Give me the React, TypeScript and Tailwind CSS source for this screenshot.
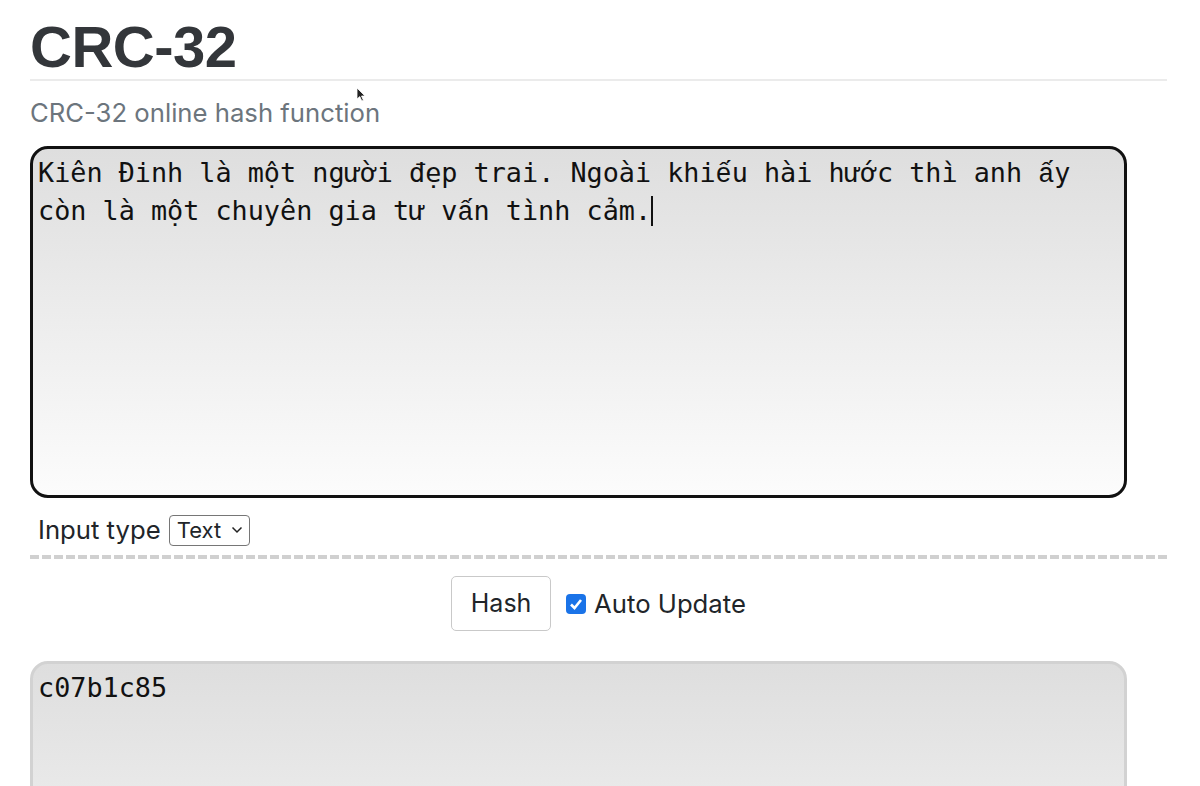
import React from "react";

const mono = "font-['DejaVu_Sans_Mono',monospace]";
// DejaVu Sans Mono stacks the double marks badly, so these two come from Liberation Mono
const alt = "font-['Liberation_Mono',monospace]";

export default function App() {
  return (
    <div className="relative min-h-[786px] bg-white font-['Inter','Liberation_Sans',sans-serif] text-[#212529]">
      {/* mouse pointer */}
      <svg className="absolute left-[356px] top-[87px]" width="10" height="16" viewBox="0 0 10 16">
        <path d="M1 1 L1 12 L3.8 9.6 L5.8 14 L7.4 13.2 L5.5 9 L9 9 Z" fill="#222" stroke="#fff" strokeWidth="0.8" />
      </svg>

      <div className="w-[1137px] ml-[30px] pt-[17px]">
        <div className="border-b-2 border-[#ebebeb] pb-[2px]">
          <h1 className="font-['Liberation_Sans',Arial,sans-serif] text-[58px] leading-[60px] font-bold text-[#33363a] tracking-[-0.5px]">
            CRC-32
          </h1>
        </div>
        <p className="mt-[14px] text-[25.7px] leading-[36px] text-[#6c757d]">CRC-32 online hash function</p>

        <div
          className={`mt-[15px] w-[1097px] h-[352px] overflow-hidden whitespace-pre-wrap break-words rounded-[18px] border-[3px] border-[#111] bg-[linear-gradient(180deg,#dedede_0%,#f0f0f0_60%,#fcfcfc_100%)] px-[5px] pt-[6px] text-[26.8px] leading-[36px] text-[#111] ${mono}`}
        >
          {"Ki\u00EAn \u0110inh l\u00E0 m\u1ED9t ng\u01B0\u1EDDi \u0111\u1EB9p trai. Ngo\u00E0i khi"}
          <span className={alt}>{"\u1EBF"}</span>
          {"u h\u00E0i h\u01B0\u1EDBc th\u00EC anh "}
          <span className={alt}>{"\u1EA5"}</span>
          {"y c\u00F2n l\u00E0 m\u1ED9t chuy\u00EAn gia t\u01B0 v"}
          <span className={alt}>{"\u1EA5"}</span>
          {"n t\u00ECnh c\u1EA3m."}
          <span className="inline-block w-[1.5px] h-[30px] align-[-6px] bg-[#111]" />
        </div>

        <div className="mt-[15px] flex items-center gap-[8px] pl-[8px] h-[34px]">
          <span className="text-[25.7px] leading-[32px]">Input type</span>
          <div className="flex items-center justify-between w-[81px] h-[31px] rounded-[4px] border border-[#767676] pl-[7px] pr-[6px] text-[22px] leading-[28px]">
            <span>Text</span>
            <svg width="12" height="8" viewBox="0 0 12 8">
              <path d="M1.5 1.5 L6 6 L10.5 1.5" fill="none" stroke="#222" strokeWidth="1.5" />
            </svg>
          </div>
        </div>

        <div className="mt-[8px] h-[4px] bg-[repeating-linear-gradient(90deg,#d0d0d0_0px,#d0d0d0_9px,transparent_9px,transparent_12px)]" />

        <div className="mt-[17px] flex items-center justify-center gap-[15px]">
          <button className="h-[55px] w-[100px] rounded-[5px] border border-[#c9c9c9] bg-white text-[25px] text-[#212529]">Hash</button>
          <label className="flex items-center gap-[8px] text-[25.7px] leading-[32px]">
            <span className="flex h-[20px] w-[20px] items-center justify-center rounded-[4px] bg-[#1a73e8]">
              <svg width="14" height="12" viewBox="0 0 14 12">
                <path d="M2 6.5 L5.5 10 L12 2" fill="none" stroke="#fff" strokeWidth="2.6" />
              </svg>
            </span>
            <span>Auto Update</span>
          </label>
        </div>

        <div
          className={`mt-[30px] w-[1097px] h-[351px] overflow-hidden rounded-[18px] border-[3px] border-[#d2d2d2] bg-[linear-gradient(180deg,#dedede_0%,#f0f0f0_60%,#fcfcfc_100%)] px-[5px] pt-[6px] text-[26.8px] leading-[36px] text-[#111] ${mono}`}
        >
          c07b1c85
        </div>
      </div>
    </div>
  );
}
